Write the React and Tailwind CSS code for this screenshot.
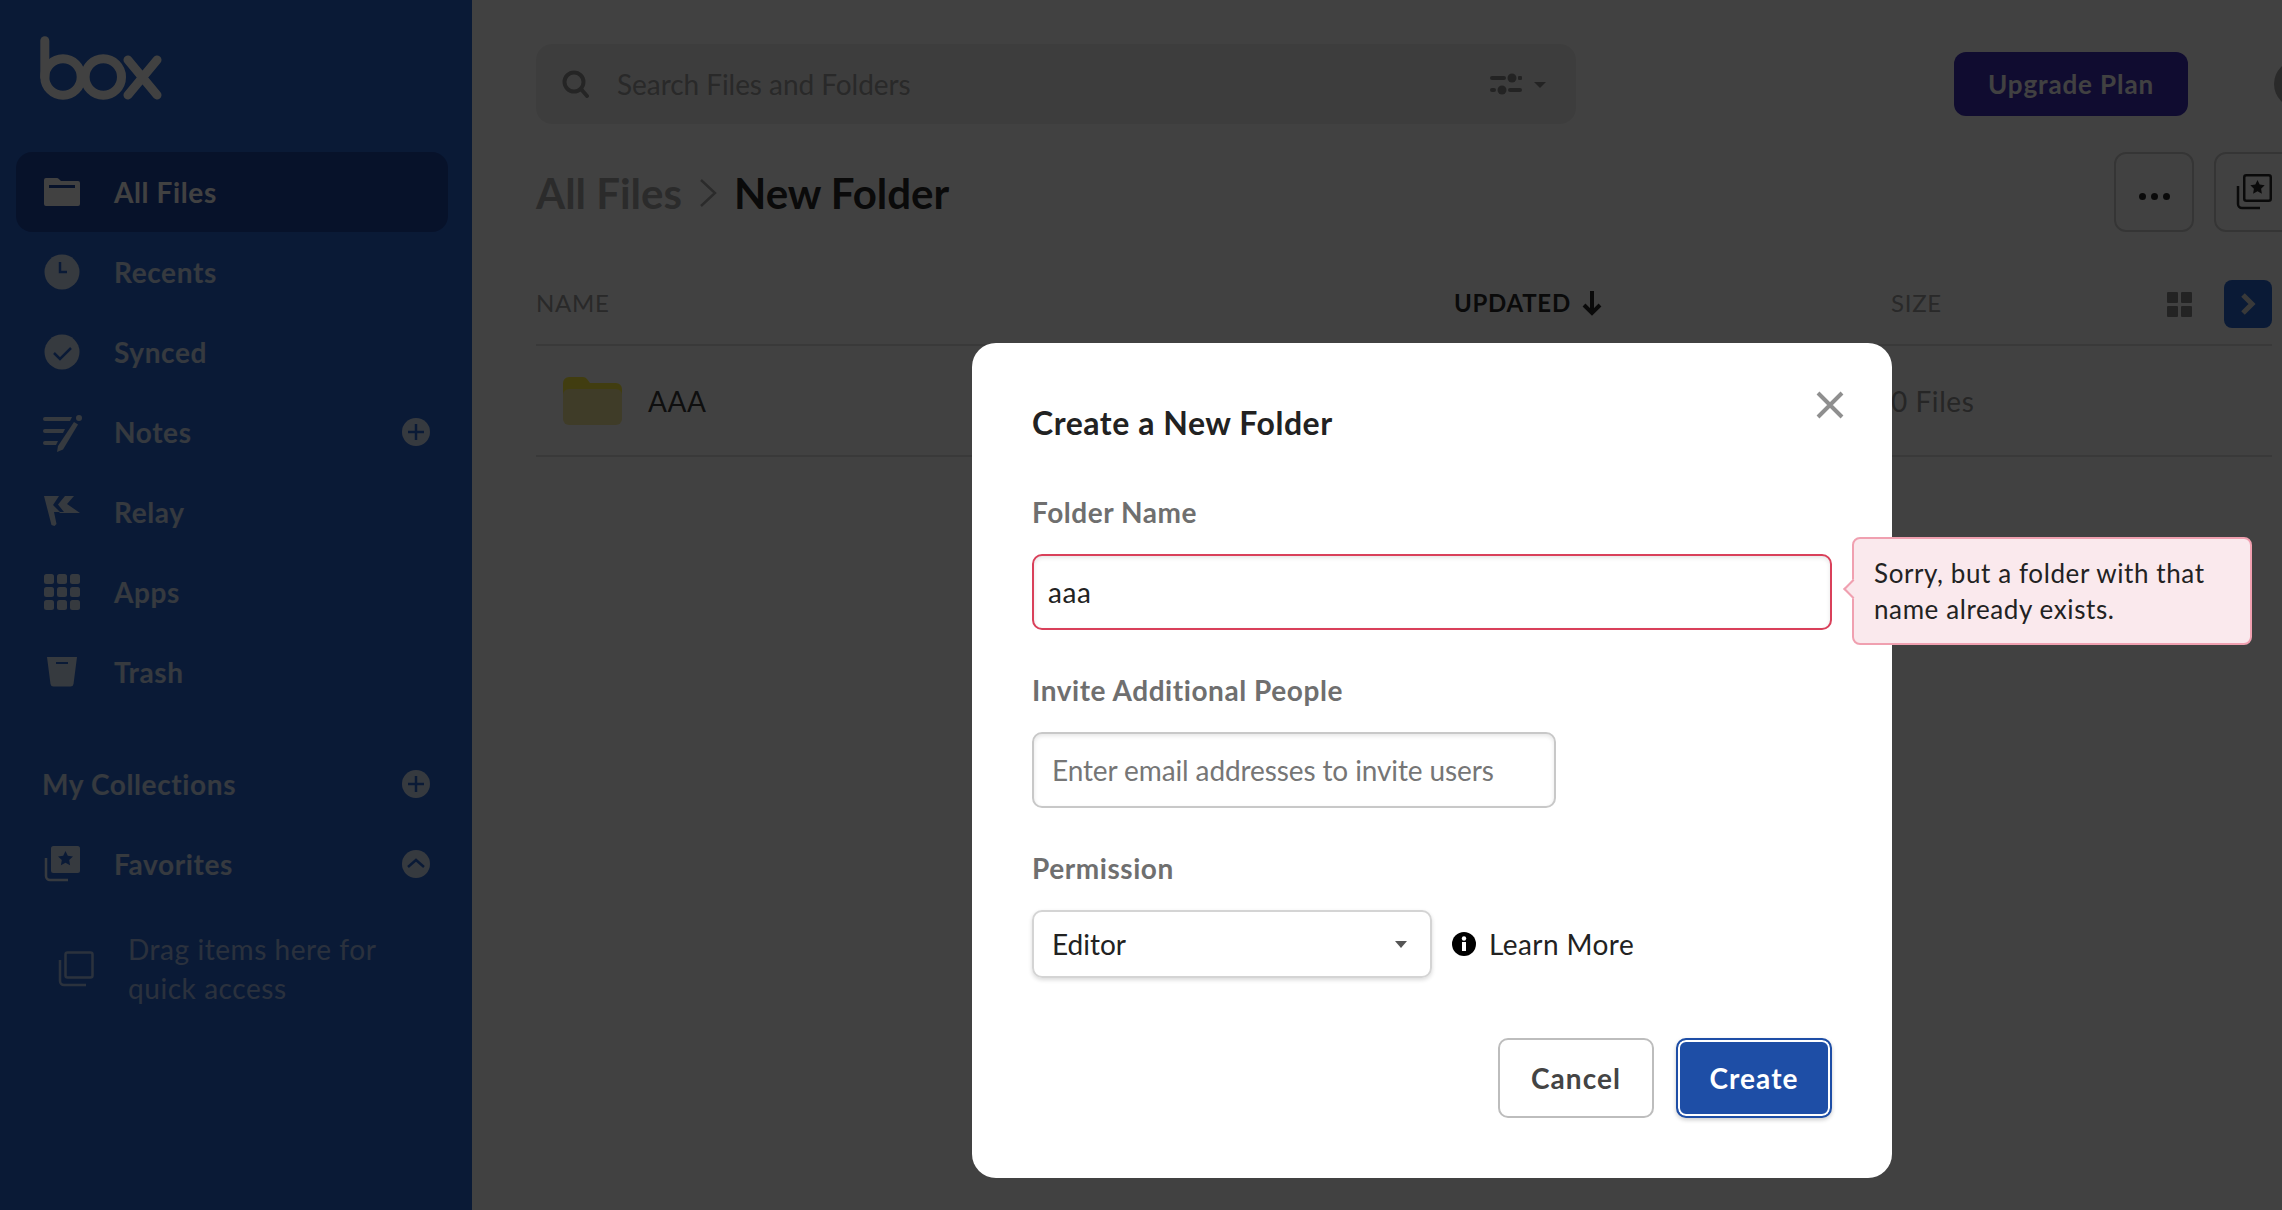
import React from "react";

function BoxLogo() {
    return (
        <svg width="122" height="64" viewBox="0 0 122 64" fill="none" stroke="#fff" strokeWidth="9" strokeLinecap="round">
            <path d="M4.8 4.8V41" />
            <circle cx="23" cy="41" r="18.2" />
            <circle cx="63.3" cy="41" r="18.2" />
            <path d="M88 24l29 35M117 24L88 59" />
        </svg>
    );
}

function FolderIcon() {
    return (
        <svg width="36" height="36" viewBox="0 0 36 36">
            <path fill="currentColor" fillRule="evenodd" d="M2 4h11a2 2 0 0 1 1.600.8L17 7h17a2 2 0 0 1 2 2v21a2 2 0 0 1-2 2H2a2 2 0 0 1-2-2V6a2 2 0 0 1 2-2zM5 11v3h26v-3z" />
        </svg>
    );
}

function ClockIcon() {
    return (
        <svg width="36" height="36" viewBox="0 0 36 36">
            <circle cx="18" cy="18" r="17.500" fill="currentColor" />
            <path d="M16 8v10h7" fill="none" stroke="#2767d4" strokeWidth="2.500" />
        </svg>
    );
}

function CheckIcon() {
    return (
        <svg width="36" height="36" viewBox="0 0 36 36">
            <circle cx="18" cy="18" r="17.500" fill="currentColor" />
            <path d="M10 19l6 6 11-11" fill="none" stroke="#2767d4" strokeWidth="2.500" />
        </svg>
    );
}

function NotesIcon() {
    return (
        <svg className="shrink-0" width="40" height="40" viewBox="0 0 40 40" fill="currentColor">
            <path d="M3 5h27l-2 4H3a2 2 0 0 1 0-4zM3 17h20l-2 4H3a2 2 0 0 1 0-4zM3 29h13l-2 4H3a2 2 0 0 1 0-4z" />
            <path d="M32 10l4 2.500-15 25-6 2.500 1-6z" />
            <circle cx="37" cy="6" r="3" />
        </svg>
    );
}

function RelayIcon() {
    return (
        <svg width="36" height="36" viewBox="0 0 36 36" fill="currentColor">
            <path d="M0 2h15l-6 9 7 7h-6l2.500 12-2 2-3-1z" />
            <path d="M21 2h9l-7 8 13 9H16l-1-1h5l-6-7.500z" />
        </svg>
    );
}

function AppsIcon() {
    return (
        <svg width="36" height="36" viewBox="0 0 36 36" fill="currentColor">
            {[0, 13, 26].map((x) =>
                [0, 13, 26].map((y) => <rect key={`${x}-${y}`} x={x} y={y} width="10" height="10" rx="2.500" />)
            )}
        </svg>
    );
}

function TrashIcon() {
    return (
        <svg width="36" height="36" viewBox="0 0 36 36">
            <path fill="currentColor" d="M3 3h30l-3.500 27a3 3 0 0 1-3 2.500h-17a3 3 0 0 1-3-2.500z" />
            <path d="M12 9h12" stroke="#2767d4" strokeWidth="2" />
        </svg>
    );
}

function FavoritesIcon() {
    return (
        <svg width="36" height="36" viewBox="0 0 36 36">
            <rect x="7" y="0" width="29" height="27" rx="2.500" fill="currentColor" />
            <path d="M21.500 5l2.300 4.800 5.200.7-3.800 3.600.9 5.200-4.600-2.500-4.600 2.500.9-5.200-3.800-3.600 5.200-.7z" fill="#2767d4" />
            <path d="M2 12v18a4 4 0 0 0 4 4h18" fill="none" stroke="currentColor" strokeWidth="2.500" />
        </svg>
    );
}

function CollectionButtonIcon() {
    return (
        <svg width="36" height="36" viewBox="0 0 36 36" fill="none" stroke="currentColor" strokeWidth="2.500">
            <rect x="8.250" y="1.250" width="26.500" height="25.500" rx="2" />
            <path d="M21.500 6l2.200 4.500 5 .7-3.600 3.500.8 5-4.400-2.400-4.400 2.400.8-5-3.600-3.500 5-.7z" fill="currentColor" stroke="none" />
            <path d="M2 12v18a4 4 0 0 0 4 4h18" />
        </svg>
    );
}

function DragIcon() {
    return (
        <svg width="36" height="36" viewBox="0 0 36 36" fill="none" stroke="currentColor" strokeWidth="2.500">
            <rect x="7.500" y="1.500" width="27" height="25" rx="2" />
            <path d="M2 9v21a4 4 0 0 0 4 4h22" />
        </svg>
    );
}

function PlusCircle() {
    return (
        <svg width="28" height="28" viewBox="0 0 28 28">
            <circle cx="14" cy="14" r="14" fill="currentColor" />
            <path d="M14 6v16M6 14h16" stroke="#2767d4" strokeWidth="2.500" />
        </svg>
    );
}

function UpCircle() {
    return (
        <svg width="28" height="28" viewBox="0 0 28 28">
            <circle cx="14" cy="14" r="14" fill="currentColor" />
            <path d="M6 17l8-7 8 7" fill="none" stroke="#2767d4" strokeWidth="2.500" />
        </svg>
    );
}

const navItems = [
    { label: "All Files", icon: <FolderIcon />, active: true },
    { label: "Recents", icon: <ClockIcon /> },
    { label: "Synced", icon: <CheckIcon /> },
    { label: "Notes", icon: <NotesIcon />, action: <PlusCircle /> },
    { label: "Relay", icon: <RelayIcon /> },
    { label: "Apps", icon: <AppsIcon /> },
    { label: "Trash", icon: <TrashIcon /> },
];

function NavRow({ label, icon, active, action }) {
    return (
        <div className={`ml-4 mr-6 flex h-20 items-center justify-between rounded-2xl pl-7 pr-[18px] ${active ? "bg-[#1f46a5] text-white" : "text-white/80"}`}>
            <div className="flex items-center gap-[34px]">
                <span className="flex h-9 w-9 items-center justify-center">{icon}</span>
                <span className="text-[28px] font-bold tracking-[0.022em]">{label}</span>
            </div>
            {action}
        </div>
    );
}

function Sidebar() {
    return (
        <aside className="h-[1210px] w-[472px] shrink-0 bg-[#2767d4]">
            <div className="h-[152px] pl-10 pt-9">
                <BoxLogo />
            </div>
            {navItems.map((item) => (
                <NavRow key={item.label} {...item} />
            ))}
            <div className="ml-4 mr-6 mt-8 flex h-20 items-center justify-between pl-[26px] pr-[18px] text-white/80">
                <span className="text-[28px] font-bold tracking-[0.022em]">My Collections</span>
                <PlusCircle />
            </div>
            <NavRow label="Favorites" icon={<FavoritesIcon />} action={<UpCircle />} />
            <div className="ml-[58px] mt-[26px] flex items-center gap-[34px] text-white/60">
                <DragIcon />
                <p className="text-[28px] leading-[39px] tracking-[0.02em]">
                    Drag items here for
                    <br />
                    quick access
                </p>
            </div>
        </aside>
    );
}

function MainArea() {
    return (
        <main className="min-w-0 flex-1 overflow-hidden pl-16 pt-11">
            <div className="flex items-center">
                <div className="flex h-20 w-[1040px] shrink-0 items-center rounded-2xl bg-[#f0f0f0] pl-[26px] pr-7">
                    <svg width="28" height="28" viewBox="0 0 28 28" fill="none" stroke="#929292" strokeWidth="4" strokeLinecap="round">
                        <circle cx="12" cy="12" r="9.500" />
                        <path d="M19 19l6 7" />
                    </svg>
                    <span className="ml-[27px] text-[28px] tracking-[-0.002em] text-[#a0a0a0]">Search Files and Folders</span>
                    <svg className="ml-auto" width="58" height="22" viewBox="0 0 58 22">
                        <g fill="#8a8a8a">
                            <rect x="0" y="3" width="16" height="4" rx="2" />
                            <circle cx="22" cy="5" r="4.500" />
                            <rect x="28" y="3" width="4" height="4" rx="1" />
                            <rect x="0" y="15" width="6" height="4" rx="2" />
                            <circle cx="12" cy="17" r="4.500" />
                            <rect x="18" y="15" width="14" height="4" rx="2" />
                            <path d="M44 9h12l-6 6z" />
                        </g>
                    </svg>
                </div>
                <button className="ml-[378px] h-16 w-[234px] shrink-0 rounded-xl bg-[#3f2fbc] text-[26px] font-bold tracking-[0.034em] text-white">
                    Upgrade Plan
                </button>
                <div className="ml-[86px] h-12 w-12 shrink-0 rounded-full bg-[#a5a5a5]" />
            </div>

            <div className="mt-7 flex items-center gap-5">
                <div className="flex h-20 w-[1558px] shrink-0 items-center pt-[2px]">
                    <span className="text-[42px] font-bold text-[#a8a8a8]">All Files</span>
                    <svg className="ml-[17px] mr-4" width="19" height="30" viewBox="0 0 19 30" fill="none" stroke="#a8a8a8" strokeWidth="2.500">
                        <path d="M2 2l14 13L2 28" />
                    </svg>
                    <span className="text-[42px] font-bold text-[#282828]">New Folder</span>
                </div>
                <button className="flex h-20 w-[80px] shrink-0 items-center justify-center gap-[5px] rounded-xl border-2 border-[#cfcfcf] pt-2">
                    <span className="h-[7px] w-[7px] rounded-full bg-[#2a2a2a]" />
                    <span className="h-[7px] w-[7px] rounded-full bg-[#2a2a2a]" />
                    <span className="h-[7px] w-[7px] rounded-full bg-[#2a2a2a]" />
                </button>
                <button className="flex h-20 w-[80px] shrink-0 items-center justify-center rounded-xl border-2 border-[#cfcfcf] text-[#2a2a2a]">
                    <CollectionButtonIcon />
                </button>
            </div>

            <div className="mt-12 w-[1736px]">
                <div className="grid h-[66px] grid-cols-[918px_437px_1fr] items-center border-b-2 border-[#e0e0e0] pb-4 text-[24px] tracking-[0.03em] text-[#a0a0a0]">
                    <span className="mb-[2px]">NAME</span>
                    <span className="mb-[2px] flex items-center gap-[10px] font-bold text-[#2a2a2a]">
                        UPDATED
                        <svg width="22" height="26" viewBox="0 0 22 26" fill="none" stroke="#2a2a2a" strokeWidth="4">
                            <path d="M11 1v22M3 15l8 8 8-8" />
                        </svg>
                    </span>
                    <div className="flex items-center justify-between">
                        <span className="mb-[2px]">SIZE</span>
                        <div className="flex items-center gap-[32px]">
                            <span className="grid grid-cols-2 gap-[3px]">
                                <i className="h-[11px] w-[11px] rounded-[1px] bg-[#8a8a8a]" />
                                <i className="h-[11px] w-[11px] rounded-[1px] bg-[#8a8a8a]" />
                                <i className="h-[11px] w-[11px] rounded-[1px] bg-[#8a8a8a]" />
                                <i className="h-[11px] w-[11px] rounded-[1px] bg-[#8a8a8a]" />
                            </span>
                            <span className="flex h-12 w-12 items-center justify-center rounded-lg bg-[#2767d4]">
                                <svg width="18" height="24" viewBox="0 0 18 24" fill="none" stroke="#e0e0e0" strokeWidth="5">
                                    <path d="M4 3l9 9-9 9" />
                                </svg>
                            </span>
                        </div>
                    </div>
                </div>
                <div className="grid h-[111px] grid-cols-[918px_437px_1fr] items-center border-b-2 border-[#e0e0e0] text-[28px] tracking-[0.02em]">
                    <div className="flex items-center gap-[26px] pl-[27px] text-[#3b3b3b]">
                        <svg width="59" height="48" viewBox="0 0 59 48">
                            <path fill="#fff040" d="M6 0h14a5 5 0 0 1 4 2l3 4h26a6 6 0 0 1 6 6v12H0V6a6 6 0 0 1 6-6z" />
                            <rect y="12" width="59" height="36" rx="6" fill="#f7eb9d" />
                        </svg>
                        <span>AAA</span>
                    </div>
                    <span />
                    <span className="text-[#949494]">0 Files</span>
                </div>
            </div>
        </main>
    );
}

function FieldLabel({ children }) {
    return <label className="block text-[28px] font-bold leading-9 tracking-[0.02em] text-[#6f6f6f]">{children}</label>;
}

function NewFolderModal() {
    return (
        <div className="absolute left-[972px] top-[343px] h-[835px] w-[920px] rounded-3xl bg-white p-[60px]">
            <button className="absolute right-[48px] top-[48px] text-[#8f8f8f]">
                <svg width="28" height="28" viewBox="0 0 28 28" fill="none" stroke="currentColor" strokeWidth="4">
                    <path d="M2 2l24 24M26 2L2 26" />
                </svg>
            </button>
            <h2 className="text-[32px] font-bold leading-10 tracking-[0.017em] text-[#222]">Create a New Folder</h2>

            <div className="mt-[51px]">
                <FieldLabel>Folder Name</FieldLabel>
            </div>
            <input
                readOnly
                value="aaa"
                className="mt-6 block h-[76px] w-[800px] rounded-[10px] border-2 border-[#d9405a] px-[14px] text-[28px] tracking-[0.02em] text-[#222] shadow-[inset_0_2px_4px_rgba(0,0,0,0.1)] outline-none"
            />

            <div className="mt-[42px]">
                <FieldLabel>Invite Additional People</FieldLabel>
            </div>
            <input
                readOnly
                placeholder="Enter email addresses to invite users"
                className="mt-6 block h-[76px] w-[524px] rounded-[10px] border-2 border-[#c8c8c8] px-[18px] text-[28px] tracking-[-0.004em] shadow-[inset_0_2px_4px_rgba(0,0,0,0.1)] outline-none placeholder:text-[#767676]"
            />

            <div className="mt-[42px]">
                <FieldLabel>Permission</FieldLabel>
            </div>
            <div className="mt-6 flex items-center">
                <div className="flex h-[68px] w-[400px] items-center justify-between rounded-[10px] border-2 border-[#d4d4d4] pl-[18px] pr-[23px] shadow-[0_2px_4px_rgba(0,0,0,0.15)]">
                    <span className="text-[28px] text-[#222]">Editor</span>
                    <svg width="12" height="7" viewBox="0 0 12 7">
                        <path d="M0 0h12l-6 7z" fill="#555" />
                    </svg>
                </div>
                <svg className="ml-[20px]" width="24" height="24" viewBox="0 0 24 24">
                    <circle cx="12" cy="12" r="12" fill="#000" />
                    <rect x="10" y="10" width="4" height="9" fill="#fff" />
                    <circle cx="12" cy="6.500" r="2.200" fill="#fff" />
                </svg>
                <span className="ml-[13px] text-[28px] tracking-[0.015em] text-[#222]">Learn More</span>
            </div>

            <div className="mt-[60px] flex justify-end gap-[22px]">
                <button className="h-20 w-[156px] rounded-[10px] border-2 border-[#bdbdbd] text-[28px] font-bold tracking-[0.037em] text-[#444]">
                    Cancel
                </button>
                <button className="h-20 w-[156px] rounded-[10px] border-2 border-[#1e4ea6] bg-[#1e4ea6] text-[28px] font-bold tracking-[0.037em] text-white shadow-[inset_0_0_0_2px_#fff,0_2px_4px_rgba(0,0,0,0.2)]">
                    Create
                </button>
            </div>

            <div className="absolute left-[880px] top-[194px] h-[108px] w-[400px] rounded-lg border-2 border-[#f0a0b0] bg-[#fae9ed] py-[16px] pl-5 text-[26px] leading-9 tracking-[0.023em] text-[#222]">
                <span className="absolute left-[-8px] top-[43px] h-[14px] w-[14px] rotate-45 border-b-2 border-l-2 border-[#f0a0b0] bg-[#fae9ed]" />
                Sorry, but a folder with that
                <br />
                name already exists.
            </div>
        </div>
    );
}

export default function App() {
    return (
        <div className="relative flex h-[1210px] w-[2282px] overflow-hidden bg-white font-['Lato',sans-serif]">
            <Sidebar />
            <MainArea />
            <div className="absolute inset-0 bg-black/[0.745]" />
            <NewFolderModal />
        </div>
    );
}
